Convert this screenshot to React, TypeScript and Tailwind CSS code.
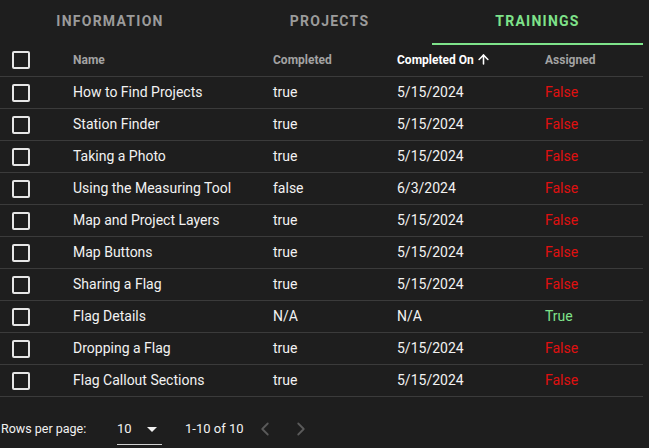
import { ArrowUp, ChevronLeft, ChevronRight } from 'lucide-react';

type Training = {
  name: string;
  completed: string;
  completedOn: string;
  assigned: boolean;
};

const trainings: Training[] = [
  { name: 'How to Find Projects', completed: 'true', completedOn: '5/15/2024', assigned: false },
  { name: 'Station Finder', completed: 'true', completedOn: '5/15/2024', assigned: false },
  { name: 'Taking a Photo', completed: 'true', completedOn: '5/15/2024', assigned: false },
  { name: 'Using the Measuring Tool', completed: 'false', completedOn: '6/3/2024', assigned: false },
  { name: 'Map and Project Layers', completed: 'true', completedOn: '5/15/2024', assigned: false },
  { name: 'Map Buttons', completed: 'true', completedOn: '5/15/2024', assigned: false },
  { name: 'Sharing a Flag', completed: 'true', completedOn: '5/15/2024', assigned: false },
  { name: 'Flag Details', completed: 'N/A', completedOn: 'N/A', assigned: true },
  { name: 'Dropping a Flag', completed: 'true', completedOn: '5/15/2024', assigned: false },
  { name: 'Flag Callout Sections', completed: 'true', completedOn: '5/15/2024', assigned: false },
];

const cols = 'grid grid-cols-[73px_200px_124px_148px_98px]';

function Checkbox() {
  return (
    <div className="flex items-center pl-3">
      <div className="w-[18px] h-[18px] rounded-[2px] border-2 border-[#e6e6e6]" />
    </div>
  );
}

export default function App() {
  const tabs = ['Information', 'Projects', 'Trainings'];

  return (
    <div
      className="w-[649px] h-[448px] bg-[#1e1e1e] text-[#f2f2f2] overflow-hidden"
      style={{ fontFamily: 'Roboto, "Noto Sans", sans-serif' }}
    >
      <div className="w-[643px]">
        {/* Tabs */}
        <div className="grid grid-cols-[220px_212px_211px] h-[45px]">
          {tabs.map((tab, i) => {
            const active = i === 2;
            return (
              <div
                key={tab}
                className={`flex items-start justify-center pt-[11px] text-[14px] font-bold uppercase tracking-[0.09em] ${
                  i === 1 ? 'pl-[7px]' : ''
                } ${active ? 'text-[#7ee38a] border-b-2 border-[#7ee38a]' : 'text-[#9b9b9b]'}`}
              >
                {tab}
              </div>
            );
          })}
        </div>

        {/* Header */}
        <div className={`${cols} h-[32px] pb-[2px] items-center border-b border-[#3b3b3b] text-[12px] font-bold`}>
          <Checkbox />
          <div className="text-[#a3a3a3]">Name</div>
          <div className="text-[#a3a3a3]">Completed</div>
          <div className="flex items-center gap-[2px] text-white">
            Completed On
            <ArrowUp size={15} strokeWidth={2.5} />
          </div>
          <div className="text-[#a3a3a3]">Assigned</div>
        </div>

        {/* Rows */}
        {trainings.map((t) => (
          <div key={t.name} className={`${cols} h-[32px] items-center border-b border-[#3b3b3b] text-[14px]`}>
            <Checkbox />
            <div>{t.name}</div>
            <div>{t.completed}</div>
            <div>{t.completedOn}</div>
            <div className={t.assigned ? 'text-[#7ee38a]' : 'text-[#e01010]'}>
              {t.assigned ? 'True' : 'False'}
            </div>
          </div>
        ))}

        {/* Pagination */}
        <div className="flex items-center h-[51px] pt-[13px] text-[12.5px]">
          <span className="pl-[1px] w-[117px]">Rows per page:</span>
          <div className="relative flex items-center w-[45px] h-[31px] border-b border-[#cfcfcf] text-[13px]">
            <span>10</span>
            <svg className="absolute left-[30px] top-[13px]" width="10" height="5" viewBox="0 0 10 5">
              <path d="M0 0 L10 0 L5 5 Z" fill="#f0f0f0" />
            </svg>
          </div>
          <span className="ml-[23px] text-[13px]">1-10 of 10</span>
          <div className="flex items-center ml-[10px] gap-[14px] text-[#5a5a5a]">
            <ChevronLeft size={22} strokeWidth={2} />
            <ChevronRight size={22} strokeWidth={2} />
          </div>
        </div>
      </div>
    </div>
  );
}
